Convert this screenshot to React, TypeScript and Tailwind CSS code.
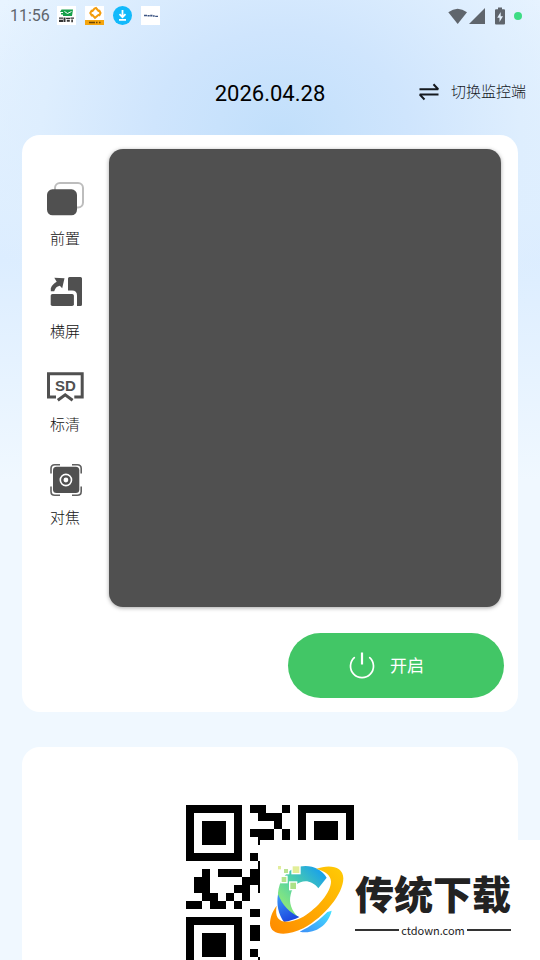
import React from 'react'
import clsx from 'clsx'

const QR_ROWS = [
  '#######.##..#.#######',
  '#.....#..###..#.....#',
  '#.###.#....#..#.###.#',
  '#.###.#.###.#.#.###.#',
  '#.###.#..##.#.#.###.#',
  '#.....#.......#.....#',
  '#######.#.#.#.#######',
  '.........#.##........',
  '..#.###.##..#.##..#.#',
  '.##....###.#...#.##..',
  '.##...##.#..##..#..#.',
  '..##.#.#..#..#.##.#.#',
  '##.##.#...##..#...##.',
  '........##.#.#..#.#..',
  '#######...#..##.#..##',
  '#.....#.##..#..#.##..',
  '#.###.#.##.##.#...#.#',
  '#.###.#....#..##.#..#',
  '#.###.#.#.#..#..##.#.',
  '#.....#..#..##.#..#.#',
  '#######.##.#..#.##..#',
]

const CameraIcon = () => (
  <svg viewBox="0 0 40 40" className="size-10" fill="none">
    <rect x="10" y="4" width="28" height="24.5" rx="5" stroke="#bdbdbd" strokeWidth="2" />
    <rect x="2" y="10.3" width="30" height="26" rx="5.5" fill="#505050" />
  </svg>
)

const RotateIcon = () => (
  <svg viewBox="0 0 40 40" className="size-10" fill="#505050">
    <path d="M9.3 5.8 19.5 6.2 17.2 16.2 14.8 13.8C11.5 14.5 10.3 16.2 9.2 19.2H5.8V16.2C7 13.3 9 11.2 11.7 9.8Z" />
    <path d="M24.5 5H35.5Q37 5 37 6.5V32.5Q37 34 35.5 34H32V23.5Q32 18.5 27 18.5H23V6.5Q23 5 24.5 5Z" />
    <rect x="5.7" y="22" width="23.2" height="12" rx="1.8" />
  </svg>
)

const QualityIcon = () => (
  <svg viewBox="0 0 40 40" className="size-10" fill="none">
    <path d="M11 32H3.5V8.8H37.2V32H29.3" stroke="#505050" strokeWidth="3" />
    <path d="M12.8 35.3 20.2 29.8 27.6 35.3" stroke="#505050" strokeWidth="3" />
    <text x="20.3" y="26" textAnchor="middle" className="font-['Liberation_Sans',sans-serif] text-[15px] font-bold" fill="#505050">SD</text>
  </svg>
)

const FocusIcon = () => (
  <svg viewBox="0 0 40 40" className="size-10" fill="none">
    <path d="M15 6.8H9.8Q6 6.8 6 10.6V15.5M27 6.8H32.2Q36.2 6.8 36.2 10.6V15.5M15 37.2H9.8Q6 37.2 6 33.4V28.5M27 37.2H32.2Q36.2 37.2 36.2 33.4V28.5" stroke="#606060" strokeWidth="1.6" />
    <rect x="8" y="8.8" width="26.3" height="26.3" rx="3.5" fill="#505050" />
    <circle cx="20.9" cy="22" r="5.6" stroke="#fff" strokeWidth="1.6" />
    <circle cx="20.9" cy="22" r="2.4" fill="#fff" />
  </svg>
)

const TOOLS = [
  { label: '前置', Icon: CameraIcon },
  { label: '横屏', Icon: RotateIcon },
  { label: '标清', Icon: QualityIcon },
  { label: '对焦', Icon: FocusIcon },
]

const StatusBar = () => (
  <div className="flex h-8 shrink-0 items-center justify-between pr-[18px] pb-px pl-[10px] text-[#5f656c]">
    <div className="flex items-center gap-[7px]">
      <span className="text-base leading-5">11:56</span>
      <div className="flex gap-[9px]">
        <svg viewBox="0 0 19 19" className="size-[19px]">
          <rect width="19" height="19" fill="#fff" />
          <path d="M4.500 3.500H16L15 10H6V8.500H4V7H6V6H3Z" fill="#16a04a" />
          <path d="m7.500 5.500 3 2 4-2" stroke="#fff" strokeWidth="1" fill="none" />
          <path d="M2 11.500h4v1.200H2zm0 2.200h4v2.200H2zM6.500 11.500h2v4.600h-2zm2.600.300h4v1.200h-4zm.700 2h3v2h-3zM13.500 11.500H17v1.300h-3.500zm.800 2h1.600v2.800h-1.600z" fill="#333" />
        </svg>
        <svg viewBox="0 0 19 19" className="size-[19px]">
          <rect width="19" height="19" fill="#fff" />
          <path d="M0 14h19v5H0z" fill="#f5a50d" />
          <path d="m7 5.5 2.5-3 1.5-.5 3 3.5M7 8.5l3 3.3 4-3.3M7 4 5.3 7 7 10M14 4l1.5 3L14 10" stroke="#f39c0b" strokeWidth="2" fill="none" />
          <path d="M4 15.7h6v1.5H4zm7 0h1.5v1.5H11zm3 0h1.5v1.5H14z" fill="#6b4504" />
        </svg>
        <svg viewBox="0 0 19 19" className="size-[19px]" fill="none">
          <circle cx="9.5" cy="9.5" r="9.5" fill="#12b9fb" />
          <path d="M9.5 4V11M6.5 8.2 9.5 11.2 12.5 8.2M6 13.8H13" stroke="#fff" strokeWidth="1.8" />
        </svg>
        <svg viewBox="0 0 19 19" className="size-[19px]">
          <rect width="19" height="19" fill="#fff" />
          <path d="M3 8.7h3v1.6H3zM6.5 9h2.2v1.6H6.5zM9.2 8.8h2.3v1.6H9.2zM12 9.3h1.7v1.5H12zM14.2 9.8H17V11H14.2z" fill="#3d5583" />
        </svg>
      </div>
    </div>
    <div className="flex items-center gap-[9px]">
      <svg viewBox="0 0 38 18" className="h-[18px] w-[38px]" fill="currentColor">
        <path d="M.3 5.3Q9.7-2 19 5.3L9.7 17Z" />
        <path d="M37 1V17H21Z" />
      </svg>
      <svg viewBox="0 0 10 18" className="h-[18px] w-[10px]">
        <path d="M3 .5H7V2.3H9Q10 2.3 10 3.3V16.5Q10 17.5 9 17.5H1Q0 17.5 0 16.5V3.3Q0 2.3 1 2.3H3Z" fill="currentColor" />
        <path d="M5.7 5 2.2 10.7H4.5V15L8 9.2H5.7Z" fill="#e5f2fe" />
      </svg>
      <span className="size-2 rounded-full bg-[#3ddc84]" />
    </div>
  </div>
)

const Header = () => (
  <header className="grid h-[103px] shrink-0 grid-cols-[1fr_auto_1fr] items-center px-[14px] pt-4">
    <span />
    <h1 className="pt-1 text-[22px] leading-7 text-black">2026.04.28</h1>
    <button type="button" className="flex items-center gap-3 justify-self-end text-[15px] leading-5 font-light text-[#15191e]">
      <svg viewBox="0 0 20 18" className="h-[18px] w-5" fill="none" stroke="currentColor" strokeWidth="2">
        <path d="M.5 6.2H19.2L14.5 1.3M19.5 11.6H.8L5.5 16.5" strokeLinejoin="bevel" />
      </svg>
      切换监控端
    </button>
  </header>
)

const MonitorCard = () => (
  <section className="shrink-0 rounded-[18px] bg-white py-[14px]">
    <div className="flex pr-[17px]">
      <nav className="flex w-[87px] shrink-0 flex-col items-center gap-[23px] pt-[30px] pr-px">
        {TOOLS.map(({ label, Icon }) => (
          <button key={label} type="button" className="flex flex-col items-center gap-[10px] text-[15px] leading-5 font-light text-[#111]">
            <Icon />
            {label}
          </button>
        ))}
      </nav>
      <div className="h-[458px] flex-1 rounded-[14px] bg-[#505050] shadow-[0_1px_4px_rgba(0,0,0,0.35)]" />
    </div>
    <div className="mt-[26px] flex justify-end pr-[14px]">
      <button type="button" className="flex h-[65px] w-[216px] items-center justify-center gap-[15px] rounded-full bg-[#42c666] pr-[19px] text-[17px] leading-6 text-white">
        <svg viewBox="0 0 26 28" className="h-7 w-[26px]" fill="none" stroke="currentColor" strokeWidth="1.7">
          <path d="M5.3 5.6A11.5 11.5 0 1 0 20.7 5.6" strokeLinecap="round" />
          <path d="M13 .5V12.5" strokeWidth="2.2" />
        </svg>
        开启
      </button>
    </div>
  </section>
)

const QrCard = () => (
  <section className="flex shrink-0 justify-center rounded-[18px] bg-white py-[58px]">
    <svg viewBox="0 0 21 21" className="size-[168px]" shapeRendering="crispEdges">
      {QR_ROWS.flatMap((row, y) =>
        row.split('').map((cell, x) => (
          cell === '#' ? <rect key={`${x}-${y}`} x={x} y={y} width="1" height="1" /> : null
        ))
      )}
    </svg>
  </section>
)

const BrandLogo = () => (
  <svg viewBox="0 0 285 270" className="h-[90px] w-[95px] shrink-0">
    <defs>
      <linearGradient id="arc" x1="0" y1="1" x2="1" y2="0">
        <stop offset="0.15" stopColor="#8fea78" />
        <stop offset="0.5" stopColor="#4fd0a8" />
        <stop offset="0.9" stopColor="#18a0ec" />
      </linearGradient>
      <linearGradient id="deep" x1="0" y1="0" x2="0.4" y2="1">
        <stop offset="0" stopColor="#3c9bf8" />
        <stop offset="1" stopColor="#1c49e0" />
      </linearGradient>
      <linearGradient id="ring" x1="0" y1="1" x2="1" y2="0">
        <stop offset="0" stopColor="#ff8a00" />
        <stop offset="1" stopColor="#ffcb05" />
      </linearGradient>
      <linearGradient id="tail" x1="0" y1="1" x2="1" y2="0">
        <stop offset="0" stopColor="#3c8ff8" />
        <stop offset="1" stopColor="#45e3ff" />
      </linearGradient>
    </defs>
    <path d="M200 68C182 35 138 24 103 40C68 56 52 92 54 128C58 158 84 184 116 187C94 168 86 142 92 119C100 80 145 62 175 100Z" fill="url(#arc)" />
    <path d="M54 118C49 148 55 178 72 201C88 199 104 193 118 186C88 173 67 150 54 118Z" fill="url(#deep)" />
    <path d="M168 42C205 28 250 32 250 70C250 116 195 185 130 220C80 245 30 242 30 205C30 187 38 168 50 152C47 168 48 181 54 190C68 207 96 202 130 185C175 157 212 112 213 80C213 62 196 48 168 42Z" fill="url(#ring)" />
    <path d="M215 167C206 207 169 239 119 230C153 214 180 194 202 171Z" fill="url(#tail)" />
    <g stroke="#fff" strokeWidth="4">
      <rect x="52" y="31" width="13" height="14" fill="#e2ed9d" />
      <rect x="70" y="40" width="16" height="16" fill="#b9e391" />
      <rect x="96" y="32" width="24" height="24" fill="#e2ee98" />
      <rect x="63" y="64" width="18" height="19" fill="#b4e48d" />
      <rect x="89" y="81" width="21" height="23" fill="#ace187" />
    </g>
  </svg>
)

const BrandBadge = () => (
  <a href="#" className="fixed right-0 bottom-0 flex h-[120px] w-[280px] items-center bg-white font-['Noto_Sans_CJK_SC',sans-serif] text-[#222]">
    <BrandLogo />
    <div className="flex flex-col items-center">
      <span className="text-[39px] leading-[60px] font-black whitespace-nowrap">传统下载</span>
      <span className="flex w-full items-center gap-[2px] text-[11px] leading-4">
        <i className="h-[2px] flex-1 bg-[#333]" />
        ctdown.com
        <i className="h-[2px] flex-1 bg-[#333]" />
      </span>
    </div>
  </a>
)

const App: React.FC = () => {
  return (
    <div
      className={clsx(
        "flex h-screen flex-col overflow-hidden font-['Roboto','Noto_Sans_CJK_SC',sans-serif]",
        'bg-[#f0f8ff] bg-[radial-gradient(ellipse_320px_260px_at_52%_135px,#c1dffb_0%,#cfe5fd_40%,#deeefe_75%,#e8f4ff00_100%),linear-gradient(#e8f4ff_0px,#dcedff_260px,#f0f8ff_480px)]'
      )}
    >
      <StatusBar />
      <Header />
      <main className="flex flex-col gap-[35px] px-[22px]">
        <MonitorCard />
        <QrCard />
      </main>
      <BrandBadge />
    </div>
  )
}

export default App
